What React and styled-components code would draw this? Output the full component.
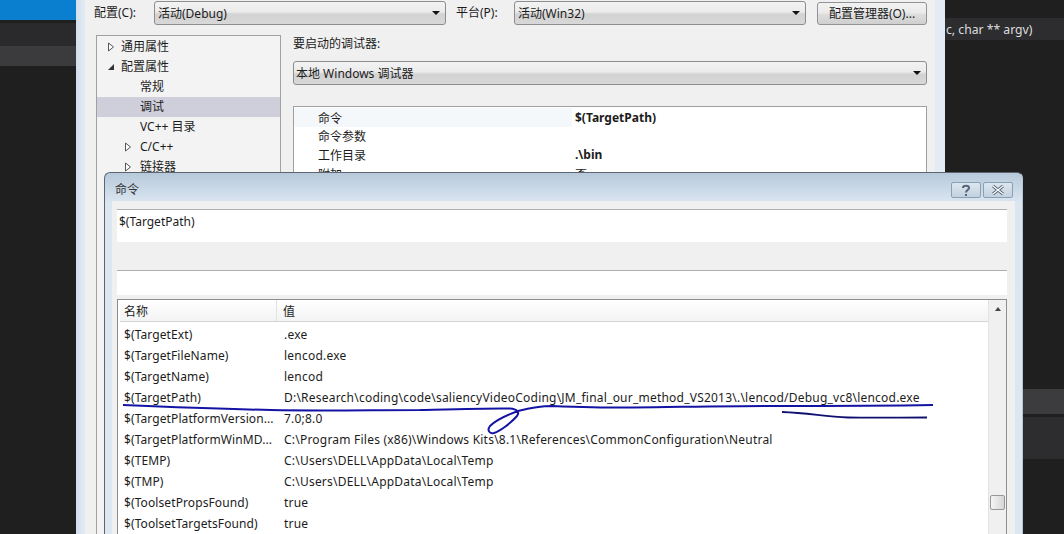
import React from "react";
import styled, { createGlobalStyle } from "styled-components";

const Global = createGlobalStyle`
  html, body { margin: 0; padding: 0; background: #1f1f20; }
  body { font-family: "Noto Sans", "Noto Sans CJK SC", sans-serif; font-size: 12px; color: #1c1c1c; }
`;

const Page = styled.div`
  position: relative; width: 1064px; height: 534px; overflow: hidden;
  display: flex; background: #1f1f20;
`;

const LeftPanel = styled.div`
  width: 76px; flex: none; display: flex; flex-direction: column;
`;
const Band = styled.div`
  height: ${p => p.$h}px; flex: none; background: ${p => p.$bg};
  color: #ddd; display: flex; align-items: center; overflow: hidden; padding-left: ${p => p.$pad || 0}px;
  font-family: "Noto Sans", sans-serif; font-size: 12.2px;
`;

const RightPanel = styled.div`
  flex: 1; display: flex; flex-direction: column; min-width: 0;
`;

const BackDialog = styled.div`
  width: 869px; flex: none; box-sizing: border-box; padding: 0 10px 0 9px;
  background: linear-gradient(90deg, #d3dfed 0, #e3ecf5 9px, #e3ecf5 100%);
`;
const BackInner = styled.div`
  height: 534px; background: #f0f0f0; box-sizing: border-box; padding: 1px 0 0 9px;
`;
const TopRow = styled.div`
  display: flex; align-items: center; height: 24px;
`;
const Label = styled.span`
  width: ${p => p.$w}px; flex: none; white-space: nowrap; box-sizing: border-box;
  padding-left: ${p => p.$pad || 0}px; position: relative; top: -1px;
`;
const Select = styled.div`
  width: ${p => p.$w}px; height: 24px; flex: none; box-sizing: border-box;
  border: 1px solid #8b8d8e; border-radius: 3px; display: flex; align-items: center;
  justify-content: space-between; padding: 0 3px 0 ${p => p.$pad ?? 3}px;
  background: linear-gradient(#f3f3f3 0, #ebebeb 45%, #d2d2d2 55%, #d8d8d8 100%);
`;
const Arrow = styled.i`
  width: 0; height: 0; margin-right: 2px;
  border-left: 4px solid transparent; border-right: 4px solid transparent; border-top: 4px solid #111;
`;
const ManagerButton = styled.div`
  width: 110px; height: 23px; margin-left: 11px; box-sizing: border-box; flex: none;
  border: 1px solid #8f9396; border-radius: 3px; display: flex; align-items: center; justify-content: center;
  background: linear-gradient(#f2f2f2 0, #ebebeb 45%, #dddddd 55%, #cfcfcf 100%);
`;
const Columns = styled.div`
  display: flex; margin-top: 10px; margin-left: 2px;
`;
const Tree = styled.div`
  width: 185px; height: 520px; flex: none; box-sizing: border-box;
  border: 1px solid #a0a0a0; background: #f3f3f3; margin-right: 12px; padding-top: 1px;
`;
const TreeRow = styled.div`
  height: 20px; display: flex; align-items: center;
  padding-left: ${p => p.$indent}px; background: ${p => (p.$selected ? "#cfcfdc" : "transparent")};
  & > span { position: relative; top: -1px; }
`;
const ArrowBox = styled.svg`
  width: 10px; height: 10px; flex: none; margin-right: ${p => p.$gap || 5}px;
`;
const Settings = styled.div`
  width: 634px; flex: none;
`;
const SettingsLabel = styled.div`
  height: 16px; line-height: 16px; margin-bottom: 10px; padding-top: 1px;
`;
const SelectGap = styled.div`
  margin-top: -1px;
`;
const PropGrid = styled.div`
  margin-top: 21px; height: 120px; box-sizing: border-box; border: 1px solid #a0a0a0; background: #fff;
  padding-top: 1px;
`;
const PropRow = styled.div`
  display: flex; height: ${p => p.$h || 19}px; align-items: center;
`;
const PropName = styled.div`
  width: 278px; flex: none; box-sizing: border-box; padding-left: 24px; height: 100%; display: flex; align-items: center;
  background: ${p => (p.$active ? "#f4f8fb" : "transparent")};
`;
const PropValue = styled.div`
  padding-left: 3px; font-weight: ${p => (p.$plain ? 400 : 700)};
`;

const FrontDialog = styled.div`
  position: absolute; left: 104px; top: 172px; width: 919px; height: 362px; box-sizing: border-box;
  border: 1px solid #5c6670; border-bottom: 0; border-right-color: #b8c6d4; border-radius: 6px 6px 0 0;
  background: linear-gradient(#b7c9da 0, #dbe6f1 30px, #dce7f2 100%);
  display: flex; flex-direction: column; overflow: hidden;
`;
const TitleBar = styled.div`
  height: 28px; flex: none; display: flex; align-items: center; justify-content: space-between;
  padding: 0 9px 0 10px;
`;
const Title = styled.span`
  color: #333; position: relative; top: 2px;
`;
const WinButtons = styled.div`
  display: flex; gap: 2px; position: relative; top: 3px;
`;
const WinButton = styled.div`
  width: 30px; height: 16px; box-sizing: border-box; border: 1px solid #8ba0b3; border-radius: 2px;
  background: linear-gradient(#dce6ef, #c3d2e0); display: flex; align-items: center; justify-content: center;
`;
const Content = styled.div`
  flex: 1; margin: 0 7px; background: #f0f0f0; padding: 8px 8px 0 5px; min-height: 0;
`;
const TextBox = styled.div`
  height: ${p => p.$h}px; box-sizing: border-box; background: #fff;
  border-top: 1px solid #b0b0b0; padding: 3px 2px 0;
  margin-bottom: ${p => p.$mb}px; line-height: 17px;
`;
const ListView = styled.div`
  box-sizing: border-box; border: 1px solid #8d8d8d; border-bottom: 0; height: 240px; background: #fff;
  display: flex; overflow: hidden;
`;
const ListBody = styled.div`
  flex: 1; min-width: 0; overflow: hidden;
`;
const ListHeader = styled.div`
  height: 22px; display: flex; align-items: center; box-sizing: border-box;
  background: linear-gradient(#ffffff, #f3f3f3); border-bottom: 1px solid #d5d5d5; margin-left: 2px;
`;
const HeaderName = styled.div`
  width: 157px; padding-left: 4px; flex: none; height: 100%; display: flex; align-items: center;
  box-sizing: border-box; border-right: 1px solid #e2e2e2;
`;
const HeaderValue = styled.span`
  padding-left: 6px;
`;
const ListRows = styled.div`
  padding-top: 2px;
`;
const ListRow = styled.div`
  height: 21px; display: flex; align-items: center; white-space: nowrap;
`;
const NameCell = styled.div`
  width: 166px; flex: none; box-sizing: border-box; padding-left: 6px; letter-spacing: 0.1px;
`;
const ValueCell = styled.span`
  letter-spacing: 0.22px;
`;
const Scrollbar = styled.div`
  width: 18px; flex: none; background: #f0f0f0; border-left: 1px solid #e3e3e3; box-sizing: border-box;
  display: flex; flex-direction: column; align-items: center;
`;
const ScrollUp = styled.i`
  width: 0; height: 0; margin-top: 7px;
  border-left: 3px solid transparent; border-right: 3px solid transparent; border-bottom: 4px solid #444;
`;
const ScrollThumb = styled.div`
  width: 15px; height: 15px; margin-top: 184px; box-sizing: border-box; border: 1px solid #979797;
  border-radius: 2px; background: linear-gradient(90deg, #f5f5f5, #d6d6d6);
`;
const Ink = styled.svg`
  position: absolute; left: 0; top: 0; width: 1064px; height: 534px; pointer-events: none;
`;

const Closed = ({ gap }) => (
  <ArrowBox $gap={gap} viewBox="0 0 10 10"><path d="M2.5 1 L7.5 5 L2.5 9 Z" fill="#fff" stroke="#555" /></ArrowBox>
);
const Open = () => (
  <ArrowBox viewBox="0 0 10 10"><path d="M8 2 V8 H2 Z" fill="#333" /></ArrowBox>
);

const rows = [
  ["$(TargetExt)", ".exe"],
  ["$(TargetFileName)", "lencod.exe"],
  ["$(TargetName)", "lencod"],
  ["$(TargetPath)", "D:\\Research\\coding\\code\\saliencyVideoCoding\\JM_final_our_method_VS2013\\.\\lencod/Debug_vc8\\lencod.exe"],
  ["$(TargetPlatformVersion...", "7.0;8.0"],
  ["$(TargetPlatformWinMD...", "C:\\Program Files (x86)\\Windows Kits\\8.1\\References\\CommonConfiguration\\Neutral"],
  ["$(TEMP)", "C:\\Users\\DELL\\AppData\\Local\\Temp"],
  ["$(TMP)", "C:\\Users\\DELL\\AppData\\Local\\Temp"],
  ["$(ToolsetPropsFound)", "true"],
  ["$(ToolsetTargetsFound)", "true"],
];

export default function App() {
  return (
    <Page>
      <Global />
      <LeftPanel>
        <Band $h={20} $bg="#0a7fd0" />
        <Band $h={3} $bg="#1f1f20" />
        <Band $h={23} $bg="#2a2a2c" />
        <Band $h={20} $bg="#3b3b3e" />
      </LeftPanel>
      <BackDialog>
        <BackInner>
          <TopRow>
            <Label $w={60}>配置(C):</Label>
            <Select $w={292}>活动(Debug)<Arrow /></Select>
            <Label $w={68} $pad={10}>平台(P):</Label>
            <Select $w={292}>活动(Win32)<Arrow /></Select>
            <ManagerButton>配置管理器(O)...</ManagerButton>
          </TopRow>
          <Columns>
            <Tree>
              <TreeRow $indent={9}><Closed /><span>通用属性</span></TreeRow>
              <TreeRow $indent={9}><Open /><span>配置属性</span></TreeRow>
              <TreeRow $indent={43}><span>常规</span></TreeRow>
              <TreeRow $indent={43} $selected><span>调试</span></TreeRow>
              <TreeRow $indent={43}><span>VC++ 目录</span></TreeRow>
              <TreeRow $indent={26}><Closed gap={7} /><span>C/C++</span></TreeRow>
              <TreeRow $indent={26}><Closed gap={7} /><span>链接器</span></TreeRow>
            </Tree>
            <Settings>
              <SettingsLabel>要启动的调试器:</SettingsLabel>
              <SelectGap><Select $w={634} $pad={2}>本地 Windows 调试器<Arrow /></Select></SelectGap>
              <PropGrid>
                <PropRow><PropName $active>命令</PropName><PropValue>$(TargetPath)</PropValue></PropRow>
                <PropRow $h={18}><PropName>命令参数</PropName></PropRow>
                <PropRow><PropName>工作目录</PropName><PropValue>.\bin</PropValue></PropRow>
                <PropRow><PropName>附加</PropName><PropValue $plain>否</PropValue></PropRow>
              </PropGrid>
            </Settings>
          </Columns>
        </BackInner>
      </BackDialog>
      <RightPanel>
        <Band $h={18} $bg="#1f1f20" />
        <Band $h={22} $bg="#2d2d30" $pad={1}>c, char ** argv)</Band>
        <Band $h={349} $bg="#1f1f20" />
        <Band $h={25} $bg="#3c3c3f" />
        <Band $h={3} $bg="#1f1f20" />
        <Band $h={42} $bg="#2d2d30" />
      </RightPanel>

      <FrontDialog>
        <TitleBar>
          <Title>命令</Title>
          <WinButtons>
            <WinButton>
              <svg width="12" height="14" viewBox="0 0 12 14"><path d="M3 5 C3 2 9 2 9 5 C9 7 6 7 6 9.5 M6 11 V13" fill="none" stroke="#556575" strokeWidth="2" /></svg>
            </WinButton>
            <WinButton>
              <svg width="16" height="12" viewBox="0 0 16 12"><path d="M3 2 L13 10 M13 2 L3 10" fill="none" stroke="#556575" strokeWidth="3" /><path d="M3 2 L13 10 M13 2 L3 10" fill="none" stroke="#fff" strokeWidth="1.2" /></svg>
            </WinButton>
          </WinButtons>
        </TitleBar>
        <Content>
          <TextBox $h={33} $mb={28}>$(TargetPath)</TextBox>
          <TextBox $h={25} $mb={4} />
          <ListView>
            <ListBody>
              <ListHeader>
                <HeaderName>名称</HeaderName>
                <HeaderValue>值</HeaderValue>
              </ListHeader>
              <ListRows>
                {rows.map(([n, v]) => (
                  <ListRow key={n}><NameCell>{n}</NameCell><ValueCell>{v}</ValueCell></ListRow>
                ))}
              </ListRows>
            </ListBody>
            <Scrollbar><ScrollUp /><ScrollThumb /></Scrollbar>
          </ListView>
        </Content>
      </FrontDialog>

      <Ink viewBox="0 0 1064 534">
        <path d="M123 405 C170 407 225 409 271 410 C320 411 373 410 420 410 C460 409 495 408 510 408.5 C517 409 520 412 517 416 C510 424 500 431 494 433 C489 434 487 430 490 426 C496 420 507 415 518 411 C526 409 540 406 552 406 C580 407 610 408 634 407.5 C680 407 730 406 769 406 C830 406 880 406 933 405" fill="none" stroke="#1414a4" strokeWidth="2" />
        <path d="M782 412 C810 413 825 417 848 417.5 C875 418 900 417.5 927 417.5" fill="none" stroke="#101070" strokeWidth="1.8" />
      </Ink>
    </Page>
  );
}
